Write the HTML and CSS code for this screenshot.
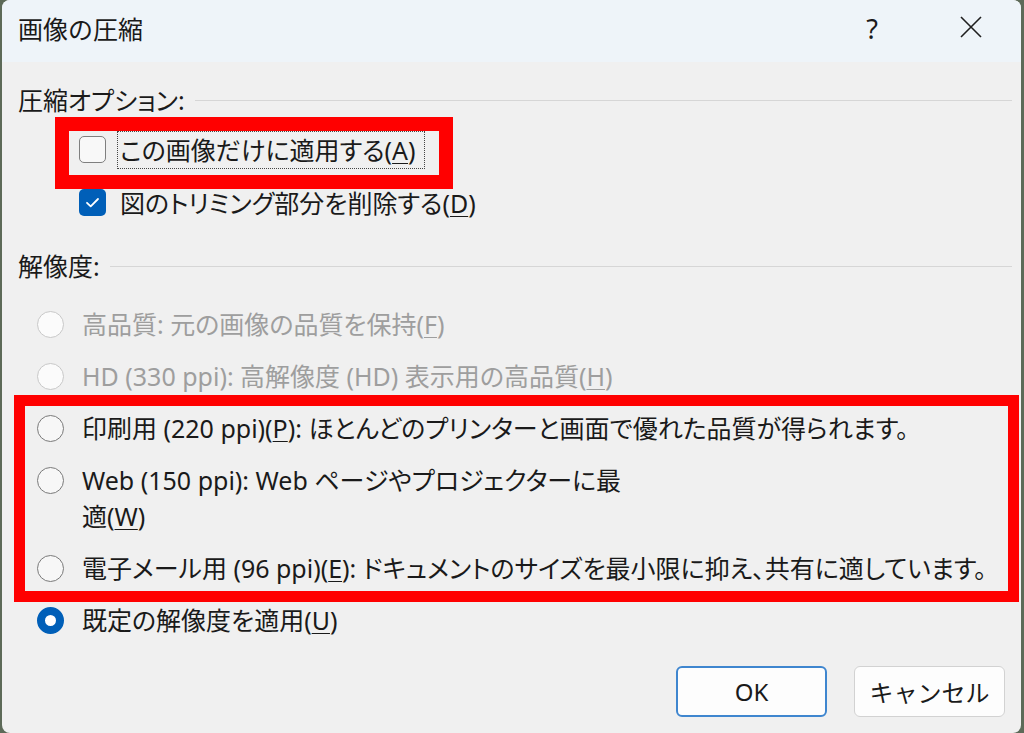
FILE: index.html
```html
<!DOCTYPE html>
<html lang="ja">
<head>
  <meta charset="utf-8">
  <title>画像の圧縮</title>
  <link rel="stylesheet" href="styles.css">
</head>
<body>
  <div class="dialog">
    <div class="titlebar">
      <span class="title">画像の圧縮</span>
      <span class="help">?</span>
      <svg class="close" width="22" height="22" viewBox="0 0 22 22">
        <path d="M1 1 L21 21 M21 1 L1 21" stroke="#1f1f1f" stroke-width="1.6" fill="none"/>
      </svg>
    </div>

    <div class="content">
      <!-- 圧縮オプション -->
      <div class="group-head">
        <span>圧縮オプション:</span>
        <div class="rule"></div>
      </div>
      <div class="checks">
        <div class="row">
          <span class="checkbox"></span>
          <span class="label focus">この画像だけに適用する(<u>A</u>)</span>
        </div>
        <div class="row">
          <span class="checkbox checked">
            <svg width="27" height="27" viewBox="0 0 27 27">
              <path d="M8 13.8 L11.7 17.4 L19 10" stroke="#fff" stroke-width="1.8" fill="none" stroke-linecap="round" stroke-linejoin="round"/>
            </svg>
          </span>
          <span class="label">図のトリミング部分を削除する(<u>D</u>)</span>
        </div>
      </div>

      <!-- 解像度 -->
      <div class="group-head second">
        <span>解像度:</span>
        <div class="rule"></div>
      </div>
      <div class="radios">
        <div class="row disabled">
          <span class="radio"></span>
          <span class="label">高品質: 元の画像の品質を保持(<u>F</u>)</span>
        </div>
        <div class="row disabled">
          <span class="radio"></span>
          <span class="label">HD (330 ppi): 高解像度 (HD) 表示用の高品質(<u>H</u>)</span>
        </div>
        <div class="row">
          <span class="radio"></span>
          <span class="label">印刷用 (220 ppi)(<u>P</u>): ほとんどのプリンターと画面で優れた品質が得られます。</span>
        </div>
        <div class="row">
          <span class="radio"></span>
          <span class="label">Web (150 ppi): Web ページやプロジェクターに最<br>適(<u>W</u>)</span>
        </div>
        <div class="row">
          <span class="radio"></span>
          <span class="label">電子メール用 (96 ppi)(<u>E</u>): ドキュメントのサイズを最小限に抑え、共有に適しています。</span>
        </div>
        <div class="row">
          <span class="radio selected"></span>
          <span class="label">既定の解像度を適用(<u>U</u>)</span>
        </div>
      </div>

      <div class="footer">
        <button class="btn default">OK</button>
        <button class="btn">キャンセル</button>
      </div>
    </div>

    <!-- 注釈の赤枠 -->
    <div class="mark mark-one"></div>
    <div class="mark mark-two"></div>
  </div>
</body>
</html>
```

FILE: styles.css
```css
html, body {
  margin: 0;
  height: 100%;
}

body {
  background-color: #5d6a58;
  font-family: "Noto Sans", "Noto Sans CJK JP", sans-serif;
  font-feature-settings: "palt";
  color: #1a1a1a;
  overflow: hidden;
}

.dialog {
  position: relative;
  margin-left: 2px;
  width: 1019px;
  height: 733px;
  background-color: #f0f0f0;
  border-radius: 8px;
  overflow: hidden;
}

.titlebar {
  display: flex;
  align-items: center;
  height: 62px;
  padding-left: 16px;
  padding-right: 39px;
  background-color: #eef4f9;
  font-feature-settings: normal;
}

.title {
  font-size: 25px;
  flex: 1;
  line-height: 1;
  margin-top: -4px;
}

.help {
  font-size: 27px;
  margin-right: 82px;
  margin-top: -6px;
}

.close {
  margin-top: -8px;
}

.content {
  padding: 20px 9px 0 16px;
  font-size: 25px;
  line-height: 36px;
}

.group-head {
  display: flex;
  align-items: center;
}

.group-head.second {
  margin-top: 27px;
}

.rule {
  flex: 1;
  height: 1px;
  margin-left: 10px;
  background-color: #d6d6d6;
}

.row {
  display: flex;
  align-items: flex-start;
}

.checks {
  margin-top: 14px;
  margin-left: 61px;
  display: flex;
  flex-direction: column;
  gap: 16px;
}

.checks .label {
  margin-left: 14px;
}

.checks .label.focus {
  margin-left: 11px;
  padding: 0 8px 0 2px;
  border: 1px dotted #444;
  margin-top: -1px;
}

.checkbox {
  width: 27px;
  height: 27px;
  margin-top: 4px;
  box-sizing: border-box;
  border: 1.5px solid #7f7f7f;
  border-radius: 5px;
  background-color: #f8f8f8;
}

.checkbox.checked {
  border: none;
  background-color: #005fb8;
}

.checkbox svg {
  display: block;
}

.radios {
  margin-top: 22px;
  margin-left: 19px;
  display: flex;
  flex-direction: column;
  gap: 16px;
}

.radios .label {
  margin-left: 18px;
}

.radio {
  width: 27px;
  height: 27px;
  margin-top: 5px;
  box-sizing: border-box;
  border: 1.5px solid #7a7a7a;
  border-radius: 50%;
  background-color: #f7f7f7;
}

.radio.selected {
  border: 8px solid #005fb8;
  background-color: #fff;
}

.disabled {
  color: #9e9e9e;
}

.disabled .radio {
  border-color: #c8c8c8;
  background-color: #fbfbfb;
}

u {
  text-underline-offset: 3px;
  text-decoration-thickness: 1px;
}

.footer {
  display: flex;
  justify-content: flex-end;
  gap: 27px;
  margin-top: 28px;
  margin-right: 7px;
}

.btn {
  width: 151px;
  height: 51px;
  font-family: inherit;
  font-size: 24px;
  color: #1a1a1a;
  background-color: #fdfdfd;
  border: 1.5px solid #d2d2d2;
  border-radius: 6px;
  padding: 0;
}

.btn.default {
  border: 2px solid #3f86cf;
}

.mark {
  position: absolute;
  border: 14px solid #ff0000;
  box-sizing: border-box;
}

.mark-one {
  left: 53px;
  top: 117px;
  width: 398px;
  height: 72px;
}

.mark-two {
  left: 12px;
  top: 395px;
  width: 1005px;
  height: 207px;
  border-width: 11px;
}
```
